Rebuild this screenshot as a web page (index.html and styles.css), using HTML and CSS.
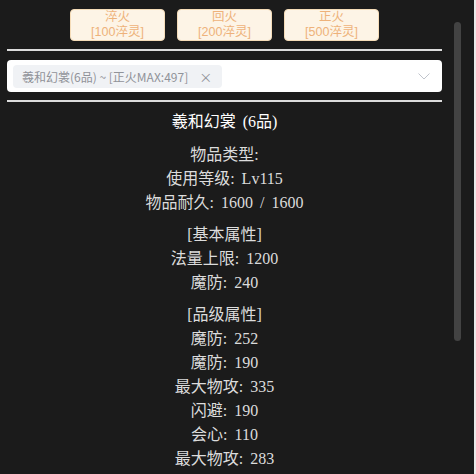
FILE: index.html
```html
<!DOCTYPE html>
<html lang="zh">
<head>
<meta charset="utf-8">
<title>装备详情</title>
<link rel="stylesheet" href="styles.css">
</head>
<body>
<div class="page">
  <div class="btn-row">
    <button class="btn"><span class="btn-line">淬火</span><span class="btn-line">[100淬灵]</span></button>
    <button class="btn"><span class="btn-line">回火</span><span class="btn-line">[200淬灵]</span></button>
    <button class="btn"><span class="btn-line">正火</span><span class="btn-line">[500淬灵]</span></button>
  </div>
  <div class="rule"></div>
  <div class="select">
    <span class="tag">羲和幻裳(6品) ~ [正火MAX:497]<span class="tag-close">×</span></span>
    <svg class="chevron" width="12" height="7" viewBox="0 0 12 7"><path d="M0.5 0.5 L6 6 L11.5 0.5" fill="none" stroke="#c0c4cc" stroke-width="1"/></svg>
  </div>
  <div class="rule rule-bottom"></div>
  <div class="detail">
    <div class="title">羲和幻裳 (6品)</div>
    <div class="group first">
      <div class="line">物品类型:</div>
      <div class="line">使用等级: Lv115</div>
      <div class="line">物品耐久: 1600 / 1600</div>
    </div>
    <div class="group">
      <div class="line">[基本属性]</div>
      <div class="line">法量上限: 1200</div>
      <div class="line">魔防: 240</div>
    </div>
    <div class="group">
      <div class="line">[品级属性]</div>
      <div class="line">魔防: 252</div>
      <div class="line">魔防: 190</div>
      <div class="line">最大物攻: 335</div>
      <div class="line">闪避: 190</div>
      <div class="line">会心: 110</div>
      <div class="line">最大物攻: 283</div>
    </div>
  </div>
</div>
<div class="scrollbar"></div>
<div class="edge"></div>
</body>
</html>
```
FILE: styles.css
```css
html, body {
  margin: 0;
  height: 100%;
  overflow: hidden;
  background: #1b1b1b;
}
.page {
  width: 435px;
  padding: 9px 0 0 7px;
  font-family: "Liberation Serif", "Noto Sans CJK SC", serif;
}
.btn-row {
  display: flex;
  justify-content: center;
  gap: 12px;
}
.btn {
  width: 95px;
  height: 32px;
  padding: 0;
  background: #fdf4e6;
  border: 1px solid #f5dcb8;
  border-radius: 4px;
  color: #eeb27a;
  font-family: "Liberation Sans", "Noto Sans CJK SC", sans-serif;
  font-size: 12.5px;
  line-height: 15px;
  display: flex;
  flex-direction: column;
  align-items: center;
  justify-content: flex-start;
}
.btn-line {
  display: block;
  height: 15px;
}
.rule {
  height: 2px;
  background: #dcdcdc;
  margin-top: 8px;
}
.select {
  height: 32px;
  background: #fff;
  border-radius: 4px;
  display: flex;
  align-items: center;
  padding: 0 12px 0 6px;
  box-sizing: border-box;
  margin-top: 9px;
}
.tag {
  display: inline-flex;
  align-items: center;
  height: 23px;
  padding: 0 10px 0 9px;
  background: #f0f2f5;
  border-radius: 4px;
  color: #909399;
  font-family: "Noto Sans CJK SC", "Noto Sans", sans-serif;
  font-size: 12px;
  white-space: nowrap;
}
.tag-close {
  margin-left: 11px;
  font-size: 13px;
}
.chevron {
  margin-left: auto;
}
.detail {
  padding-top: 8px;
  text-align: center;
  color: #dcdcdc;
  font-size: 16px;
  line-height: 24px;
  word-spacing: 3px;
}
.title {
  color: #fff;
  height: 24px;
}
.group {
  margin-top: 8px;
}
.group.first {
  margin-top: 9px;
}
.scrollbar {
  position: absolute;
  left: 454px;
  top: 22px;
  width: 7px;
  height: 319px;
  border-radius: 4px;
  background: #434343;
}
.edge {
  position: absolute;
  top: 0;
  right: 0;
  width: 2px;
  height: 100%;
  background: #e9e9e9;
}
```
